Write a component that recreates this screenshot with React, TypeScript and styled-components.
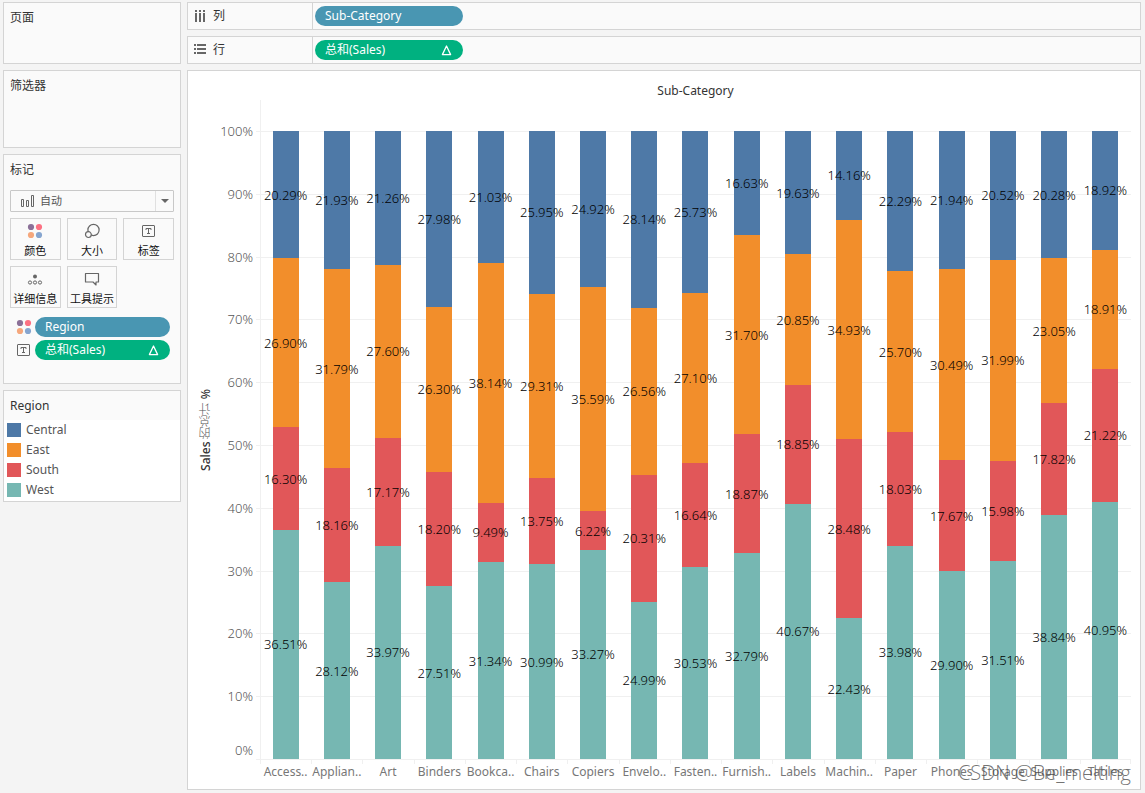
import React from "react";
import styled, { createGlobalStyle } from "styled-components";

const GlobalStyle = createGlobalStyle`
  *, *::before, *::after { box-sizing: border-box; }
  body {
    margin: 0;
    background: #f4f4f4;
    color: #333;
    font-family: "Noto Sans", "Noto Sans CJK SC", sans-serif;
    font-size: 12px;
    line-height: 18px;
  }
  button, select { font: inherit; color: inherit; }
`;

const LINE = "#d4d4d4";
const GRID = "#f0f0f0";
const BLUE = "#4996b2";
const GREEN = "#00b180";

const regions = [
  { name: "Central", color: "#4e79a7" },
  { name: "East", color: "#f28e2b" },
  { name: "South", color: "#e15759" },
  { name: "West", color: "#76b7b2" },
];

const categories: { label: string; shares: number[] }[] = [
  { label: "Access..", shares: [20.29, 26.9, 16.3, 36.51] },
  { label: "Applian..", shares: [21.93, 31.79, 18.16, 28.12] },
  { label: "Art", shares: [21.26, 27.6, 17.17, 33.97] },
  { label: "Binders", shares: [27.98, 26.3, 18.2, 27.51] },
  { label: "Bookca..", shares: [21.03, 38.14, 9.49, 31.34] },
  { label: "Chairs", shares: [25.95, 29.31, 13.75, 30.99] },
  { label: "Copiers", shares: [24.92, 35.59, 6.22, 33.27] },
  { label: "Envelo..", shares: [28.14, 26.56, 20.31, 24.99] },
  { label: "Fasten..", shares: [25.73, 27.1, 16.64, 30.53] },
  { label: "Furnish..", shares: [16.63, 31.7, 18.87, 32.79] },
  { label: "Labels", shares: [19.63, 20.85, 18.85, 40.67] },
  { label: "Machin..", shares: [14.16, 34.93, 28.48, 22.43] },
  { label: "Paper", shares: [22.29, 25.7, 18.03, 33.98] },
  { label: "Phones", shares: [21.94, 30.49, 17.67, 29.9] },
  { label: "Storage", shares: [20.52, 31.99, 15.98, 31.51] },
  { label: "Supplies", shares: [20.28, 23.05, 17.82, 38.84] },
  { label: "Tables", shares: [18.92, 18.91, 21.22, 40.95] },
];

const axisSteps = [100, 90, 80, 70, 60, 50, 40, 30, 20, 10];

const Page = styled.div`
  position: relative;
  display: flex;
  gap: 6px;
  min-height: 100vh;
  padding: 2px 4px 3px 3px;
`;

const Sidebar = styled.aside`
  flex: none;
  width: 178px;
  display: flex;
  flex-direction: column;
  gap: 6px;
`;

const Card = styled.section<{ $minHeight: number }>`
  min-height: ${(p) => p.$minHeight}px;
  padding: 6px;
  background: #fafafa;
  border: 1px solid ${LINE};
`;

const CardTitle = styled.h2`
  margin: 0;
  font-size: 12px;
  line-height: 18px;
  font-weight: 400;
`;

const MarkType = styled.div`
  position: relative;
  margin-top: 11px;
  height: 22px;
  color: #555;
  svg {
    position: absolute;
    top: 4px;
    left: 10px;
    pointer-events: none;
  }
`;

const MarkSelect = styled.select`
  width: 100%;
  height: 100%;
  padding: 0 24px 0 29px;
  appearance: none;
  background: #fafafa;
  border: 1px solid #c8c8c8;
  border-radius: 1px;
  font-size: 11px;
`;

const SelectArrow = styled.span`
  position: absolute;
  top: 1px;
  right: 1px;
  bottom: 1px;
  width: 18px;
  display: grid;
  place-items: center;
  border-left: 1px solid #e0e0e0;
  pointer-events: none;
  &::after {
    content: "";
    border: 4px solid transparent;
    border-top-color: #666;
    border-bottom: 0;
  }
`;

const MarkGrid = styled.div`
  display: grid;
  grid-template-columns: repeat(3, 1fr);
  gap: 6px;
  margin-top: 6px;
`;

const MarkButton = styled.button`
  display: flex;
  flex-direction: column;
  align-items: center;
  height: 42px;
  padding: 4px 0 0;
  background: #fafafa;
  border: 1px solid ${LINE};
  color: #111;
  font-size: 11px;
  line-height: 16px;
  white-space: nowrap;
  svg { flex: none; margin-bottom: 4px; }
`;

const EncodingList = styled.div`
  display: flex;
  flex-direction: column;
  gap: 3px;
  margin-top: 9px;
  padding: 0 4px 0 6px;
`;

const Encoding = styled.div`
  display: flex;
  align-items: center;
  gap: 3px;
  > svg { flex: none; }
`;

const Pill = styled.button<{ $color: string }>`
  display: flex;
  align-items: center;
  justify-content: space-between;
  height: 20px;
  width: 100%;
  max-width: 148px;
  padding: 0 11px 0 10px;
  border: 0;
  border-radius: 10px;
  background: ${(p) => p.$color};
  color: #fff;
  font-size: 12px;
  line-height: 20px;
`;

const Legend = styled.section`
  border: 1px solid ${LINE};
  background: #fff;
  h2 {
    padding: 6px 6px 5px;
    background: #fafafa;
  }
`;

const LegendList = styled.ul`
  margin: 0;
  padding: 0 3px 1px;
  list-style: none;
`;

const LegendItem = styled.li`
  display: flex;
  align-items: center;
  gap: 5px;
  height: 20px;
  line-height: 20px;
  color: #555;
`;

const Swatch = styled.span<{ $color: string }>`
  width: 14px;
  height: 14px;
  background: ${(p) => p.$color};
`;

const Main = styled.main`
  flex: 1;
  min-width: 0;
  display: flex;
  flex-direction: column;
  gap: 6px;
`;

const ShelfRow = styled.div`
  display: flex;
  height: 28px;
  background: #fafafa;
  border: 1px solid ${LINE};
`;

const ShelfName = styled.div`
  flex: none;
  display: flex;
  align-items: center;
  gap: 6px;
  width: 125px;
  padding-left: 5px;
  border-right: 1px solid ${LINE};
`;

const ShelfDrop = styled.div`
  flex: 1;
  display: flex;
  align-items: center;
  padding-left: 2px;
`;

const Viz = styled.section`
  flex: 1;
  display: grid;
  grid-template-columns: 36px 29px 3px 4px 1fr;
  grid-template-rows: 29px 31px minmax(400px, 1fr) 30px;
  padding-right: 9px;
  background: #fff;
  border: 1px solid ${LINE};
`;

const VizTitle = styled.h2`
  grid-area: 1 / 5;
  margin: 0;
  padding-top: 11px;
  font-size: 12px;
  line-height: 18px;
  font-weight: 400;
  text-align: center;
`;

const AxisTitle = styled.div`
  grid-area: 2 / 1 / 4 / 2;
  justify-self: center;
  align-self: center;
  writing-mode: vertical-rl;
  transform: rotate(180deg);
  font-weight: 500;
  span { color: #555; font-weight: 300; }
`;

const AxisLabels = styled.div`
  grid-area: 3 / 2;
  display: flex;
  flex-direction: column;
  color: #555;
  font-size: 13px;
  font-weight: 300;
`;

const AxisStep = styled.div`
  flex: 1 1 0;
  display: flex;
  flex-direction: column;
  justify-content: space-between;
  align-items: flex-end;
  span:first-child { margin-top: -9px; }
`;

const GridLines = styled.div`
  grid-area: 3 / 4 / 4 / 6;
  display: flex;
  flex-direction: column;
  div { flex: 1 1 0; border-top: 1px solid ${GRID}; }
`;

const AxisRule = styled.div`
  grid-area: 2 / 5 / 4 / 6;
  border-left: 1px solid ${GRID};
`;

const Bars = styled.div`
  grid-area: 3 / 5;
  display: grid;
  grid-template-columns: repeat(17, 1fr);
  justify-items: center;
`;

const Bar = styled.div`
  display: flex;
  flex-direction: column;
  width: 26px;
  height: 100%;
`;

const Segment = styled.div<{ $color: string }>`
  flex: 0 0 auto;
  display: flex;
  align-items: center;
  justify-content: center;
  background: ${(p) => p.$color};
  color: #000;
  font-size: 13px;
  font-weight: 300;
  white-space: nowrap;
`;

const Categories = styled.div`
  grid-area: 4 / 4 / 5 / 6;
  display: grid;
  grid-template-columns: repeat(17, 1fr);
  padding-left: 4px;
  border-top: 1px solid ${GRID};
  color: #777;
`;

const Category = styled.div`
  display: flex;
  justify-content: center;
  padding-top: 3px;
  white-space: nowrap;
  background: linear-gradient(${GRID}, ${GRID}) 0 0 / 1px 4px no-repeat;
  &:last-child {
    background:
      linear-gradient(${GRID}, ${GRID}) 0 0 / 1px 4px no-repeat,
      linear-gradient(${GRID}, ${GRID}) 100% 0 / 1px 4px no-repeat;
  }
`;

const Watermark = styled.div`
  position: absolute;
  right: 14px;
  bottom: 6px;
  color: rgba(70, 70, 70, 0.75);
  font-family: "Open Sans", sans-serif;
  font-size: 20px;
  line-height: 28px;
  font-weight: 300;
  pointer-events: none;
`;

const Icon = ({ children, w = 16, h = 16 }: { children: React.ReactNode; w?: number; h?: number }) => (
  <svg width={w} height={h} viewBox={`0 0 ${w} ${h}`} fill="none" stroke="#666" aria-hidden="true">
    {children}
  </svg>
);

const ColorIcon = () => (
  <Icon>
    <g stroke="none">
      <circle cx="4" cy="4" r="3.1" fill="#8b7098" />
      <circle cx="12" cy="4" r="3.1" fill="#fc7183" />
      <circle cx="4" cy="12" r="3.1" fill="#f5a77c" />
      <circle cx="12" cy="12" r="3.1" fill="#86a5cf" />
    </g>
  </Icon>
);

const SizeIcon = () => (
  <Icon>
    <circle cx="9.5" cy="7" r="5.6" strokeWidth="1.2" />
    <circle cx="4.4" cy="11.6" r="2.9" fill="#fafafa" strokeWidth="1.2" />
  </Icon>
);

const LabelIcon = () => (
  <Icon>
    <rect x="1.5" y="2.5" width="12" height="11" rx="0.5" />
    <path d="M5 7V5.5h5V7M7.5 5.5v5M6 10.5h3" />
  </Icon>
);

const DetailIcon = () => (
  <Icon>
    <circle cx="8" cy="5.5" r="2" fill="#666" stroke="none" />
    <circle cx="3" cy="11.5" r="1.6" />
    <circle cx="8" cy="11.5" r="1.6" />
    <circle cx="13" cy="11.5" r="1.6" />
  </Icon>
);

const TooltipIcon = () => (
  <Icon>
    <path d="M1.5 2.5h13v8.5h-2.5v3l-3-3H1.5z" strokeWidth="1.2" strokeLinejoin="round" />
  </Icon>
);

const BarsIcon = () => (
  <Icon w={15} h={14}>
    <path d="M1.5 5.5h2v7h-2zM6.5 6.5h2v6h-2zM11.5 1.5h2v11h-2z" />
  </Icon>
);

const ColumnsIcon = () => (
  <Icon w={14} h={14}>
    <path d="M3 1v2M7 1v2M11 1v2M3 4v9M7 4v9M11 4v9" strokeWidth="2" />
  </Icon>
);

const RowsIcon = () => (
  <Icon w={14} h={14}>
    <path d="M1 2h2M1 6h2M1 10h2M4 2h9M4 6h9M4 10h9" strokeWidth="2" />
  </Icon>
);

const DeltaIcon = () => (
  <svg width="11" height="11" viewBox="0 0 11 11" fill="none" stroke="#fff" aria-label="表计算">
    <path d="M5.5 1L9.6 9.6H1.4z" strokeWidth="1.3" strokeLinejoin="round" />
  </svg>
);

export default function App() {
  return (
    <>
      <GlobalStyle />
      <Page>
        <Sidebar>
          <Card $minHeight={62}>
            <CardTitle>页面</CardTitle>
          </Card>
          <Card $minHeight={78}>
            <CardTitle>筛选器</CardTitle>
          </Card>
          <Card $minHeight={230}>
            <CardTitle>标记</CardTitle>
            <MarkType>
              <MarkSelect aria-label="标记" defaultValue="auto">
                <option value="auto">自动</option>
              </MarkSelect>
              <BarsIcon />
              <SelectArrow />
            </MarkType>
            <MarkGrid>
              <MarkButton><ColorIcon />颜色</MarkButton>
              <MarkButton><SizeIcon />大小</MarkButton>
              <MarkButton><LabelIcon />标签</MarkButton>
              <MarkButton><DetailIcon />详细信息</MarkButton>
              <MarkButton><TooltipIcon />工具提示</MarkButton>
            </MarkGrid>
            <EncodingList>
              <Encoding>
                <ColorIcon />
                <Pill $color={BLUE}>Region</Pill>
              </Encoding>
              <Encoding>
                <LabelIcon />
                <Pill $color={GREEN}>总和(Sales)<DeltaIcon /></Pill>
              </Encoding>
            </EncodingList>
          </Card>
          <Legend>
            <CardTitle>Region</CardTitle>
            <LegendList>
              {regions.map((r) => (
                <LegendItem key={r.name}>
                  <Swatch $color={r.color} />
                  {r.name}
                </LegendItem>
              ))}
            </LegendList>
          </Legend>
        </Sidebar>
        <Main>
          <ShelfRow>
            <ShelfName><ColumnsIcon />列</ShelfName>
            <ShelfDrop><Pill $color={BLUE}>Sub-Category</Pill></ShelfDrop>
          </ShelfRow>
          <ShelfRow>
            <ShelfName><RowsIcon />行</ShelfName>
            <ShelfDrop><Pill $color={GREEN}>总和(Sales)<DeltaIcon /></Pill></ShelfDrop>
          </ShelfRow>
          <Viz>
            <VizTitle>Sub-Category</VizTitle>
            <AxisTitle>Sales <span>的总计</span> %</AxisTitle>
            <AxisLabels>
              {axisSteps.map((step) => (
                <AxisStep key={step}>
                  <span>{step}%</span>
                  {step === 10 && <span>0%</span>}
                </AxisStep>
              ))}
            </AxisLabels>
            <GridLines>
              {axisSteps.map((step) => <div key={step} />)}
            </GridLines>
            <AxisRule />
            <Bars>
              {categories.map((c) => (
                <Bar key={c.label}>
                  {c.shares.map((share, i) => (
                    <Segment key={regions[i].name} $color={regions[i].color} style={{ height: `${share}%` }}>
                      {share.toFixed(2)}%
                    </Segment>
                  ))}
                </Bar>
              ))}
            </Bars>
            <Categories>
              {categories.map((c) => <Category key={c.label}>{c.label}</Category>)}
            </Categories>
          </Viz>
        </Main>
        <Watermark>CSDN @Be_melting</Watermark>
      </Page>
    </>
  );
}
